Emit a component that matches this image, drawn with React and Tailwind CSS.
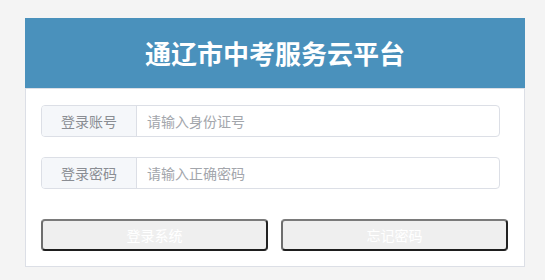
const font = { fontFamily: '"Noto Sans CJK SC", "Liberation Sans", sans-serif' };

const Field = ({ label, placeholder, type = "text" }) => (
  <div className="flex h-[32px] w-[459px] rounded-[4px] border border-[#dcdfe6] bg-white overflow-hidden">
    <div className="flex w-[95px] shrink-0 items-center justify-center border-r border-[#dcdfe6] bg-[#f5f7fa] text-[14px] text-[#8a8d93]">
      {label}
    </div>
    <input
      type={type}
      placeholder={placeholder}
      className="min-w-0 flex-1 px-[10px] text-[14px] text-[#606266] outline-none placeholder:text-[#a3a6ac]"
      style={font}
    />
  </div>
);

const Button = ({ children }) => (
  <button
    className="h-[32px] w-[227px] rounded-[4px] border-2 border-t-[#7a7a7a] border-l-[#6e6e6e] border-r-[#222] border-b-[#1e1e1e] bg-[#efefef] text-[14px] text-white"
    style={font}
  >
    {children}
  </button>
);

export default function App() {
  return (
    <div className="min-h-screen bg-[#f4f4f4] pl-[25px] pt-[18px]" style={font}>
      <div className="w-[500px]">
        <div className="flex h-[70px] items-center justify-center bg-[#4a91bc]">
          <h1 className="text-[26px] font-bold leading-none text-white">通辽市中考服务云平台</h1>
        </div>
        <div className="h-[179px] border border-[#dcdfe6] bg-white pl-[15px] pt-[16px]">
          <Field label="登录账号" placeholder="请输入身份证号" />
          <div className="mt-[20px]">
            <Field label="登录密码" placeholder="请输入正确密码" type="password" />
          </div>
          <div className="mt-[30px] flex gap-[13px]">
            <Button>登录系统</Button>
            <Button>忘记密码</Button>
          </div>
        </div>
      </div>
    </div>
  );
}
